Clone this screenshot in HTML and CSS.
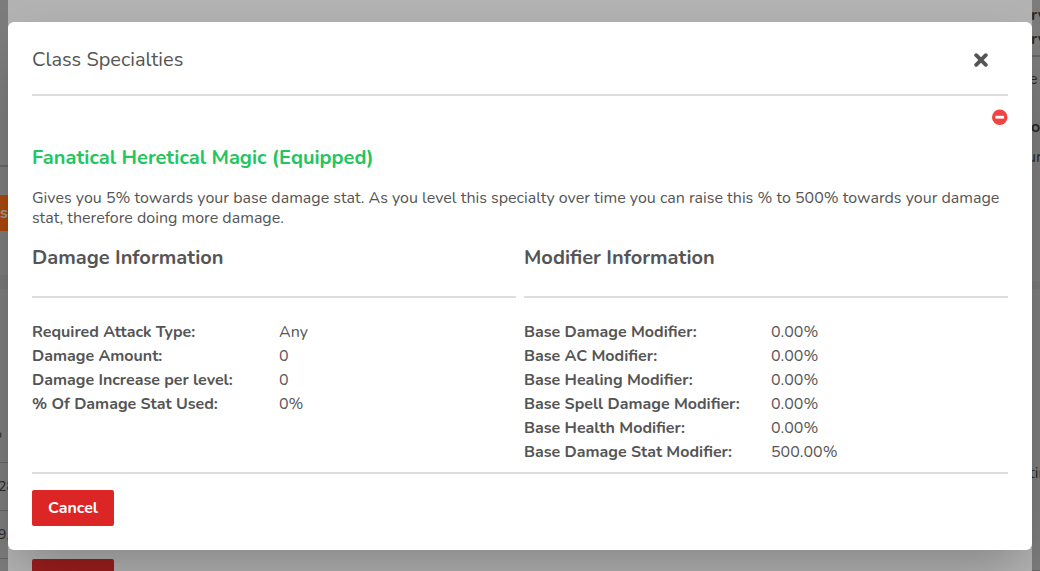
FILE: index.html
```html
<!DOCTYPE html>
<html lang="en">
<head>
<meta charset="utf-8">
<title>Class Specialties</title>
<link rel="stylesheet" href="styles.css">
</head>
<body>
<div class="backdrop" aria-hidden="true">
  <div class="edge">
    <i class="rule r165"></i><b class="orange">s</b><i class="gap g275"></i>
    <span class="frag percent">%</span><i class="rule r462"></i><span class="frag n28">28</span><i class="rule r510"></i><span class="frag n9">9,</span><i class="rule r558"></i>
  </div>
  <div class="under"><div class="under-button"></div></div>
  <div class="edge">
    <b class="frag t15">ry</b><b class="frag t39">ry</b><i class="rule r55"></i><span class="frag t79">e</span><b class="frag t127">o</b><span class="frag t157">ur</span><i class="gap g281"></i><span class="frag t473">tin</span><i class="rule r570"></i>
  </div>
</div>
<main class="modal">
  <header class="modal-header">
    <h1 class="title">Class Specialties</h1>
    <svg class="close" viewBox="0 0 14 14"><path d="M2.2 2.2 11.8 11.8M11.8 2.2 2.2 11.8"/></svg>
  </header>
  <div class="remove-row"><svg class="remove" viewBox="0 0 16 16"><circle cx="7.75" cy="8.25" r="7.75"/><path d="M3.5 6.8h8.5v2.8h-8.5z"/></svg></div>
  <h2 class="name">Fanatical Heretical Magic (Equipped)</h2>
  <p class="description">Gives you 5% towards your base damage stat. As you level this specialty over time you can raise this % to 500% towards your damage stat, therefore doing more damage.</p>
  <div class="columns">
    <section>
      <h3 class="heading">Damage Information</h3>
      <dl class="stats">
        <dt>Required Attack Type:</dt><dd>Any</dd>
        <dt>Damage Amount:</dt><dd>0</dd>
        <dt>Damage Increase per level:</dt><dd>0</dd>
        <dt>% Of Damage Stat Used:</dt><dd>0%</dd>
      </dl>
    </section>
    <section>
      <h3 class="heading">Modifier Information</h3>
      <dl class="stats">
        <dt>Base Damage Modifier:</dt><dd>0.00%</dd>
        <dt>Base AC Modifier:</dt><dd>0.00%</dd>
        <dt>Base Healing Modifier:</dt><dd>0.00%</dd>
        <dt>Base Spell Damage Modifier:</dt><dd>0.00%</dd>
        <dt>Base Health Modifier:</dt><dd>0.00%</dd>
        <dt>Base Damage Stat Modifier:</dt><dd>500.00%</dd>
      </dl>
    </section>
  </div>
  <footer class="modal-footer"><button class="cancel">Cancel</button></footer>
</main>
</body>
</html>
```
FILE: styles.css
```css
* { box-sizing: border-box; }
body { margin: 0; width: 1040px; height: 571px; overflow: hidden; position: relative; padding: 22px 8px 0; font: 16px/24px Nunito, Lato, sans-serif; color: #555; }
h1, h2, h3, p, dl, dd, dt { margin: 0; }
.backdrop { position: absolute; inset: 0; display: flex; }
.edge { position: relative; width: 8px; overflow: hidden; background: #7c7c7c; color: #292929; }
.under { width: 1024px; background: #b2b2b2; display: flex; align-items: flex-end; padding-left: 24px; }
.under-button { width: 82px; height: 12px; background: #9c1d1d; border-radius: 2px 2px 0 0; }
.frag { position: absolute; line-height: 20px; white-space: nowrap; }
.rule { position: absolute; left: 0; width: 8px; height: 2px; background: #666; }
.gap { position: absolute; left: 0; width: 8px; height: 14px; background: #777; }
.orange { position: absolute; left: 0; top: 195px; width: 8px; height: 36px; line-height: 36px; background: #a8480c; color: #9a9a9a; }
.r165 { top: 165px; } .r462 { top: 462px; height: 1px; } .r510 { top: 510px; height: 1px; } .r558 { top: 558px; height: 1px; }
.r55 { top: 55px; } .r570 { top: 570px; height: 1px; }
.g275 { top: 275px; } .g281 { top: 281px; height: 8px; }
.percent { top: 424px; left: -11px; font-size: 14px; }
.n28 { top: 477px; left: -2px; font-size: 14px; }
.n9 { top: 525px; left: -2px; font-size: 14px; }
.t15 { top: 5px; left: -1px; } .t39 { top: 29px; left: -1px; } .t79 { top: 69px; left: -3px; } .t127 { top: 117px; left: -1px; } .t157 { top: 147px; left: -5px; } .t473 { top: 463px; left: -3px; }
.modal { position: relative; width: 1024px; height: 528px; padding: 24px 24px 0; background: #fff; border-radius: 6px; box-shadow: 0 25px 50px -12px rgba(0,0,0,.27); }
.modal-header { display: flex; justify-content: space-between; height: 50px; border-bottom: 2px solid #ddd; }
.title { font-size: 20px; line-height: 28px; font-weight: 400; }
.close { width: 14px; height: 14px; margin: 7px 20px 0 0; stroke: #555; stroke-width: 3.8; stroke-linecap: round; }
.remove-row { display: flex; justify-content: flex-end; height: 48px; padding-top: 13px; }
.remove { width: 16px; height: 16px; fill: #ef4444; }
.remove path { fill: #fff; }
.name { color: #22c55e; font-size: 20px; line-height: 28px; }
.description { margin-top: 16px; line-height: 20px; }
.columns { display: grid; grid-template-columns: 1fr 1fr; gap: 8px; margin-top: 14px; height: 230px; }
.heading { height: 56px; font-size: 20px; line-height: 32px; border-bottom: 2px solid #ddd; }
.stats { display: grid; grid-template-columns: 1fr 1fr; column-gap: 10px; margin-top: 22px; line-height: 24px; }
dt { font-weight: 700; white-space: nowrap; }
.modal-footer { border-top: 2px solid #ddd; padding-top: 16px; }
.cancel { display: block; width: 82px; height: 36px; padding: 0; border: 0; border-radius: 2px; background: #dc2626; color: #fff; font: bold 16px/36px Nunito, Lato, sans-serif; }
```
